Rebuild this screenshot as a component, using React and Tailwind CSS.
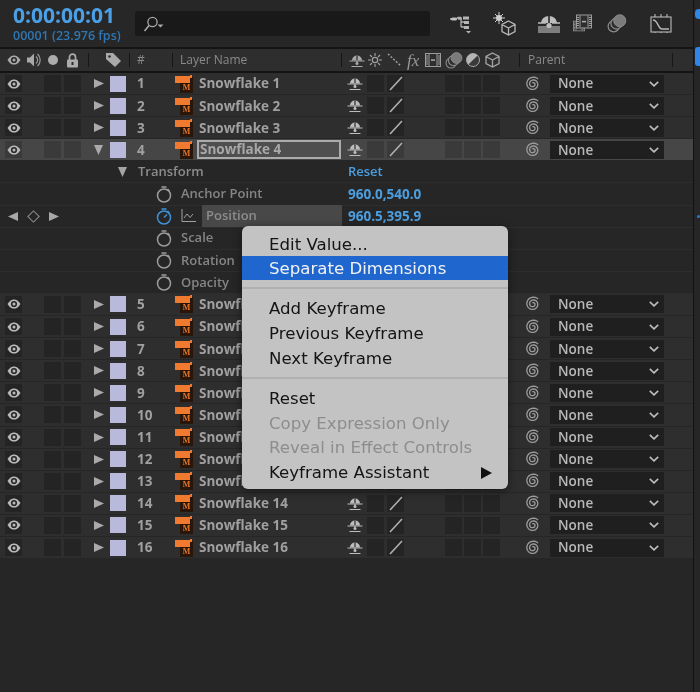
const UI = '"Open Sans", "Noto Sans", sans-serif';

const G = ({ w, h, vb, children, className = '' }) => (
  <svg width={w} height={h} viewBox={vb} className={`block shrink-0 ${className}`} fill="none">{children}</svg>
);

const Eye = ({ c = '#b9b9b9' }) => (
  <G w={14} h={10} vb="0 0 14 10">
    <path d="M0.5 5C3 1 5 .4 7 .4S11 1 13.5 5C11 9 9 9.6 7 9.6S3 9 .5 5Z" fill={c} />
    <circle cx="7" cy="5" r="3.1" fill="#2a2a2a" />
    <circle cx="7" cy="5" r="1.5" fill={c} />
  </G>
);
const Speaker = () => (
  <G w={16} h={16} vb="0 0 16 16">
    <path d="M1 5.5h3L8 1.5v13L4 10.5H1Z" fill="#a8a8a8" />
    <path d="M10 4.5a4.5 4.5 0 0 1 0 7M11.5 2a8 8 0 0 1 0 12" stroke="#9a9a9a" strokeWidth="1.2" />
  </G>
);
const Lock = () => (
  <G w={13} h={15} vb="0 0 13 15">
    <path d="M3.5 7V4.2a3 3 0 0 1 6 0V7" stroke="#adadad" strokeWidth="1.7" />
    <rect x="1" y="6.5" width="11" height="8" rx="1" fill="#adadad" />
    <rect x="5.5" y="9" width="2" height="3" fill="#2e2e2e" />
  </G>
);
const Tag = () => (
  <G w={17} h={16} vb="0 0 17 16">
    <path d="M1 1h7l8 8-6 6-9-8Z" fill="#aaa" />
    <circle cx="4.5" cy="4.5" r="1.3" fill="#2e2e2e" />
  </G>
);
const Shy = ({ c = '#bdbdbd' }) => (
  <G w={16} h={15} vb="0 0 15 15">
    <path d="M2.5 7.5a5 5 0 0 1 10 0Z" fill={c} />
    <rect x="6.9" y="2.5" width="1.2" height="5" fill="#2c2c2c" />
    <path d="M7.5 8v3" stroke={c} strokeWidth="1.2" />
    <circle cx="7.5" cy="10.4" r="1.5" fill={c} />
    <path d="M0 8h15M2 13.5h11" stroke={c} strokeWidth="1.1" />
  </G>
);
const Sun = () => (
  <G w={14} h={14} vb="0 0 14 14">
    <circle cx="7" cy="7" r="2.7" stroke="#a3a3a3" strokeWidth="1.2" />
    <path d="M7 0v3M7 11v3M0 7h3M11 7h3M2 2l2 2M10 10l2 2M12 2l-2 2M4 10l-2 2" stroke="#a3a3a3" strokeWidth="1.1" />
  </G>
);
const Film = ({ w = 16, h = 14 }) => (
  <G w={w} h={h} vb="0 0 16 14">
    <rect x=".5" y=".5" width="15" height="13" fill="#2e2e2e" stroke="#9c9c9c" />
    <path d="M4 1v12M12 1v12" stroke="#9c9c9c" />
    <path d="M1 3h2M1 5h2M1 7h2M1 9h2M1 11h2M13 3h2M13 5h2M13 7h2M13 9h2M13 11h2" stroke="#9c9c9c" />
    <rect x="6" y="6.4" width="4" height="1.4" fill="#b5b5b5" />
  </G>
);
const Stack = ({ w = 18, h = 17 }) => (
  <G w={w} h={h} vb="0 0 18 17">
    <circle cx="6" cy="11" r="5" stroke="#8d8d8d" strokeWidth="1.1" />
    <circle cx="8.5" cy="8.5" r="5" fill="#2e2e2e" stroke="#8d8d8d" strokeWidth="1.1" />
    <circle cx="11.5" cy="6" r="5.4" fill="#7b7b7b" stroke="#949494" strokeWidth=".8" />
  </G>
);
const HalfDisc = () => (
  <G w={14} h={14} vb="0 0 14 14">
    <circle cx="7" cy="7" r="6.5" fill="#b5b5b5" />
    <path d="M11.6 2.4A6.5 6.5 0 0 1 2.4 11.6Z" fill="#3a3a3a" />
    <circle cx="7" cy="7" r="6.5" stroke="#b5b5b5" strokeWidth=".8" />
  </G>
);
const Cube = ({ w = 15, h = 16, c = '#a5a5a5' }) => (
  <G w={w} h={h} vb="0 0 15 16">
    <path d="M7.5 1 14 4.5v7L7.5 15 1 11.5v-7ZM1 4.5l6.5 3.5L14 4.5M7.5 8v7" stroke={c} strokeWidth="1.3" />
  </G>
);

const spiralPath = (() => {
  const pts = [];
  const steps = 60;
  for (let i = 0; i <= steps; i++) {
    const t = i / steps;
    const a = (-45 - t * 800) * (Math.PI / 180);
    const r = 7.2 - t * 6.2;
    pts.push(`${(8 + r * Math.cos(a)).toFixed(2)} ${(8 + r * Math.sin(a)).toFixed(2)}`);
  }
  return 'M' + pts.join('L');
})();
const Spiral = () => (
  <G w={16} h={16} vb="0 0 16 16">
    <path d={spiralPath} stroke="#9c9c9c" strokeWidth="1.3" />
  </G>
);
const Chevron = () => (
  <G w={10} h={6} vb="0 0 10 6">
    <path d="M.8.8 5 4.8 9.2.8" stroke="#bdbdbd" strokeWidth="1.6" />
  </G>
);
const Stopwatch = ({ c = '#9c9c9c' }) => (
  <G w={16} h={17} vb="0 0 16 17">
    <circle cx="8" cy="9.5" r="6.5" stroke={c} strokeWidth="1.5" />
    <path d="M5.5 1h5M11.5 3l2 2" stroke={c} strokeWidth="1.4" />
    {c !== '#9c9c9c' && <path d="M8 9.5 11 6.5" stroke={c} strokeWidth="1.4" />}
  </G>
);
const Graph = () => (
  <G w={15} h={14} vb="0 0 15 14">
    <path d="M1 0v12.5h14" stroke="#a0a0a0" strokeWidth="1" />
    <path d="M3 9l3-4 3 3.5 3-3.5" stroke="#a0a0a0" strokeWidth="1" />
  </G>
);
const Tri = ({ dir = 'r', c = '#aaa' }) =>
  dir === 'r' ? (
    <G w={10} h={9} vb="0 0 10 9"><path d="M0 0l10 4.5L0 9Z" fill={c} /></G>
  ) : (
    <G w={9} h={10} vb="0 0 9 10"><path d="M0 0h9L4.5 10Z" fill={c} /></G>
  );

const AiIcon = () => (
  <div className="relative w-[18px] h-[18px] shrink-0">
    <div className="absolute left-[5px] top-[2px] w-[13px] h-[16px] bg-[#2a1608] flex items-end justify-center">
      <span className="text-[8px] leading-[10px] font-bold text-[#e8782a]" style={{ fontFamily: '"Liberation Serif", serif' }}>M</span>
    </div>
    <div className="absolute left-0 top-[1px] w-[15px] h-[7px] bg-[#ef7a30]" />
    <div className="absolute left-[15px] top-0 w-[2px] h-[3px] bg-[#ef7a30]" />
  </div>
);

const Cell = ({ className = '', children }) => (
  <div className={`w-[17px] h-[17px] flex items-center justify-center shrink-0 ${className}`}>{children}</div>
);

const Layer = ({ n, selected }) => {
  const cell = selected ? 'bg-[#3a3a3a]' : 'bg-[#242424]';
  return (
    <div
      className={`h-[22.1px] flex items-center border-b border-[#262626] ${selected ? 'bg-[#464646]' : 'bg-[#2e2e2e]'}`}
      style={{ fontFamily: UI }}
    >
      <Cell className={`ml-[5px] ${cell}`}><Eye /></Cell>
      <Cell className={`ml-[22px] ${cell}`} />
      <Cell className={`ml-[3px] ${cell}`} />
      <div className="ml-[13px] w-[16px] flex justify-start shrink-0">
        {selected ? <Tri dir="d" /> : <Tri />}
      </div>
      <div className="w-[16px] h-[16px] bg-[#b9b9dc] shrink-0" />
      <div className="ml-[11px] w-[38px] text-[13.5px] font-bold text-[#a0a0a0] shrink-0">{n}</div>
      <AiIcon />
      {selected ? (
        <div className="ml-[4px] w-[144px] h-[19px] border-2 border-[#ababab] bg-[#4f4f4f] flex items-center pl-[1px] text-[13.5px] font-bold text-[#a8a8a8] shrink-0 leading-none">
          Snowflake {n}
        </div>
      ) : (
        <div className="ml-[6px] w-[142px] shrink-0 text-[13.5px] font-bold text-[#a0a0a0] whitespace-nowrap">Snowflake {n}</div>
      )}
      <div className="ml-[6px] w-[20px] shrink-0"><Shy /></div>
      <Cell className={cell} />
      <Cell className={`ml-[3px] ${cell}`}>
        <G w={14} h={15} vb="0 0 14 15"><path d="M1 14 13 1" stroke="#b0b0b0" strokeWidth="1.6" /></G>
      </Cell>
      <Cell className={`ml-[41px] ${cell}`} />
      <Cell className={`ml-[2px] ${cell}`} />
      <Cell className={`ml-[2px] ${cell}`} />
      <div className="ml-[25px] w-[25px] shrink-0"><Spiral /></div>
      <div className="w-[114px] h-[18px] bg-[#1f1f1f] flex items-center justify-between pl-[8px] pr-[5px] shrink-0">
        <span className="text-[13.5px] font-semibold text-[#b8b8b8]">None</span>
        <Chevron />
      </div>
    </div>
  );
};

const PropRow = ({ left, children, value }) => (
  <div className="h-[22.1px] flex items-center border-b border-[#2d2d2d] bg-[#262626]" style={{ fontFamily: UI }}>
    <div className="w-[172px] flex items-center shrink-0">{left}</div>
    {children}
    {value && <span className="text-[13.5px] font-bold text-[#4b9fe0] whitespace-nowrap">{value}</span>}
  </div>
);

const MenuItem = ({ children, active, disabled, arrow }) => (
  <div
    className={`h-[24.7px] flex items-center justify-between pt-[3px] pl-[27px] pr-[16px] text-[16.6px] leading-none ${
      active ? 'bg-[#1f66cf] text-[#f2f2f2]' : disabled ? 'text-[#8d8d8d]' : 'text-[#141414]'
    }`}
  >
    <span>{children}</span>
    {arrow && <G w={11} h={12} vb="0 0 11 12"><path d="M0 0l11 6L0 12Z" fill="#111" /></G>}
  </div>
);
const MenuSep = () => (
  <div className="h-[15.5px] flex items-center"><div className="w-full h-[2px] bg-[#b0b0b0]" /></div>
);

const HeaderLabel = ({ children, className = '' }) => (
  <span className={`text-[12px] text-[#8a8a8a] whitespace-nowrap ${className}`}>{children}</span>
);
const Tick = ({ className = '' }) => <div className={`w-[1px] h-[14px] bg-[#161616] shrink-0 ${className}`} />;

export default function App() {
  const top = [1, 2, 3];
  const rest = [5, 6, 7, 8, 9, 10, 11, 12, 13, 14, 15, 16];
  return (
    <div className="relative w-[700px] h-[692px] bg-[#262626] overflow-hidden flex blur-[0.45px]" style={{ fontFamily: UI }}>
      <div className="w-[693px] shrink-0">
        {/* top bar */}
        <div className="h-[49px] flex items-center border-b-2 border-[#141414] bg-[#272727]">
          <div className="ml-[13px] w-[122px] shrink-0">
            <div className="text-[21px] leading-[24px] font-bold text-[#4a9fe6]">0:00:00:01</div>
            <div className="text-[12.5px] leading-[17px] text-[#2e77b4] font-semibold whitespace-nowrap">00001 (23.976 fps)</div>
          </div>
          <div className="w-[295px] h-[25px] bg-[#191919] rounded-[3px] flex items-center pl-[8px] shrink-0">
            <G w={24} h={16} vb="0 0 24 16">
              <circle cx="9.5" cy="6" r="4.6" stroke="#a8a8a8" strokeWidth="1.3" />
              <path d="M6 9.5 1.5 15" stroke="#a8a8a8" strokeWidth="1.6" />
              <path d="M14.5 8.5h6l-3 3Z" fill="#a8a8a8" />
            </G>
          </div>
          <div className="ml-[20px] shrink-0">
            <G w={22} h={20} vb="0 0 22 20">
              <path d="M0 5h6l2-1.5h3M8 5l4 0M11 3v10M11 8h3M11 13h3" stroke="#b0b0b0" strokeWidth="1.3" />
              <rect x="1" y="3.6" width="6" height="3" rx="1.5" fill="#c0c0c0" />
              <rect x="13" y="2.5" width="6" height="3" fill="#b5b5b5" />
              <rect x="14" y="7" width="5" height="3" fill="#b5b5b5" />
              <rect x="14" y="12" width="5" height="3" fill="#b5b5b5" />
              <path d="M16 17h5l-2.5 2.5Z" fill="#b5b5b5" />
            </G>
          </div>
          <div className="ml-[21px] relative w-[24px] h-[24px] shrink-0">
            <div className="absolute left-0 top-0">
              <G w={12} h={12} vb="0 0 12 12">
                <circle cx="6" cy="6" r="3" fill="#cfcfcf" />
                <path d="M6 0v12M0 6h12M2 2l8 8M10 2l-8 8" stroke="#cfcfcf" strokeWidth="1" />
              </G>
            </div>
            <div className="absolute left-[8px] top-[8px]"><Cube c="#b8b8b8" /></div>
          </div>
          <div className="ml-[21px] shrink-0">
            <G w={22} h={18} vb="0 0 22 18">
              <path d="M3 8a8 7 0 0 1 16 0Z" fill="#bdbdbd" />
              <rect x="10.2" y="1" width="1.6" height="9" fill="#272727" />
              <path d="M0 8h8M14 8h8" stroke="#bdbdbd" strokeWidth="1.5" />
              <rect x="0" y="11" width="22" height="7" fill="#7d7d7d" />
              <circle cx="11" cy="10.5" r="2.6" fill="#bdbdbd" />
            </G>
          </div>
          <div className="ml-[13px] relative w-[19px] h-[19px] shrink-0">
            <div className="absolute left-0 top-[5px]"><Film w={12} h={14} /></div>
            <div className="absolute left-[3px] top-0"><Film w={16} h={15} /></div>
          </div>
          <div className="ml-[15px] shrink-0"><Stack w={20} h={19} /></div>
          <div className="ml-[23px] shrink-0">
            <G w={22} h={19} vb="0 0 22 19">
              <rect x="1" y="3" width="20" height="15" stroke="#b0b0b0" strokeWidth="1.2" />
              <path d="M3 6c5 0 5 9 9 9h7" stroke="#b8b8b8" strokeWidth="1.4" />
              <path d="M5 0v3M11 0v3M17 0v3M5 18v1M11 18v1M17 18v1" stroke="#b0b0b0" strokeWidth="1.2" />
            </G>
          </div>
        </div>
        {/* header */}
        <div className="h-[24px] flex items-center bg-[#2e2e2e] border-b-2 border-[#141414]">
          <div className="ml-[7px] shrink-0"><Eye c="#a9a9a9" /></div>
          <div className="ml-[5px] shrink-0"><Speaker /></div>
          <div className="ml-[6px] w-[10px] h-[10px] rounded-full bg-[#adadad] shrink-0" />
          <div className="ml-[8px] shrink-0"><Lock /></div>
          <Tick className="ml-[9px]" />
          <div className="ml-[16px] shrink-0"><Tag /></div>
          <Tick className="ml-[7px]" />
          <HeaderLabel className="ml-[7px] w-[35px] shrink-0">#</HeaderLabel>
          <Tick />
          <HeaderLabel className="ml-[7px] w-[161px] shrink-0">Layer Name</HeaderLabel>
          <Tick />
          <div className="ml-[7px] shrink-0"><Shy c="#a9a9a9" /></div>
          <div className="ml-[3px] shrink-0"><Sun /></div>
          <div className="ml-[5px] shrink-0">
            <G w={15} h={14} vb="0 0 15 14"><path d="M1 1l13 12" stroke="#a0a0a0" strokeWidth="1.4" strokeDasharray="2 1.6" /></G>
          </div>
          <span className="ml-[5px] w-[14px] text-[17px] leading-none italic text-[#9a9a9a] shrink-0" style={{ fontFamily: '"Liberation Serif", serif' }}>fx</span>
          <div className="ml-[4px] shrink-0"><Film /></div>
          <div className="ml-[4px] shrink-0"><Stack /></div>
          <div className="ml-[3px] shrink-0"><HalfDisc /></div>
          <div className="ml-[5px] shrink-0"><Cube /></div>
          <Tick className="ml-[19px]" />
          <HeaderLabel className="ml-[8px] w-[144px] shrink-0">Parent</HeaderLabel>
          <Tick />
        </div>
        {top.map((n) => <Layer key={n} n={n} />)}
        <Layer n={4} selected />
        <PropRow
          left={<><div className="ml-[118px]"><Tri dir="d" c="#a5a5a5" /></div><span className="ml-[11px] text-[13px] font-semibold text-[#8c8c8c] whitespace-nowrap">Transform</span></>}
        >
          <span className="ml-[176px] text-[13px] font-semibold text-[#4b9fe0]">Reset</span>
        </PropRow>
        <PropRow left={<div className="ml-[156px]"><Stopwatch /></div>} value="960.0,540.0">
          <span className="ml-[9px] w-[167px] text-[13px] font-semibold text-[#858585] shrink-0">Anchor Point</span>
        </PropRow>
        <PropRow
          left={
            <>
              <div className="ml-[8px] rotate-180"><Tri c="#a8a8a8" /></div>
              <div className="ml-[11px] w-[9px] h-[9px] border border-[#8f8f8f] rotate-45 shrink-0" />
              <div className="ml-[11px]"><Tri c="#a8a8a8" /></div>
              <div className="ml-[97px]"><Stopwatch c="#3f92d8" /></div>
            </>
          }
          value={<span className="ml-[6px]">960.5,395.9</span>}
        >
          <div className="ml-[9px] w-[14px] shrink-0"><Graph /></div>
          <div className="ml-[7px] w-[140px] h-[22px] bg-[#484848] flex items-center pl-[4px] text-[13px] font-semibold text-[#8c8c8c] shrink-0">Position</div>
        </PropRow>
        {['Scale', 'Rotation', 'Opacity'].map((t) => (
          <PropRow key={t} left={<div className="ml-[156px]"><Stopwatch /></div>}>
            <span className="ml-[9px] text-[13px] font-semibold text-[#858585]">{t}</span>
          </PropRow>
        ))}
        {rest.map((n) => <Layer key={n} n={n} />)}
      </div>
      {/* right strip */}
      <div className="w-[7px] shrink-0 border-l border-[#121212] relative">
        <div className="absolute left-[1px] top-[9px] w-[8px] h-[10px] rounded-l-[4px] bg-[#2f85e8]" />
        <div className="absolute left-[1px] top-[47px] w-[8px] h-[19px] rounded-l-[3px] bg-[#2f85e8]" />
        <div className="absolute left-[3px] top-[215px] w-[3px] h-[3px] rounded-full bg-[#2f79c8]" />
      </div>
      {/* context menu */}
      <div
        className="absolute left-[242px] top-[226px] w-[266px] py-[5px] bg-[#c3c3c3] rounded-[6px] shadow-[0_2px_8px_rgba(0,0,0,0.5)]"
        style={{ fontFamily: '"DejaVu Sans", sans-serif' }}
      >
        <MenuItem>Edit Value...</MenuItem>
        <MenuItem active>Separate Dimensions</MenuItem>
        <MenuSep />
        <MenuItem>Add Keyframe</MenuItem>
        <MenuItem>Previous Keyframe</MenuItem>
        <MenuItem>Next Keyframe</MenuItem>
        <MenuSep />
        <MenuItem>Reset</MenuItem>
        <MenuItem disabled>Copy Expression Only</MenuItem>
        <MenuItem disabled>Reveal in Effect Controls</MenuItem>
        <MenuItem arrow>Keyframe Assistant</MenuItem>
      </div>
    </div>
  );
}
